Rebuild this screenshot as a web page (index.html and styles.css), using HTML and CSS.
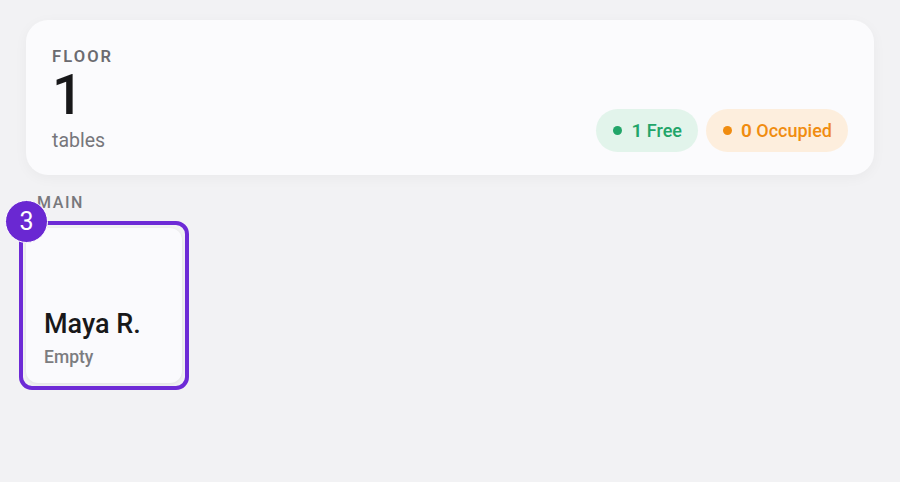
FILE: index.html
```html
<!DOCTYPE html>
<html lang="en">
<head>
<meta charset="utf-8">
<title>Floor</title>
<link rel="stylesheet" href="styles.css">
</head>
<body>
  <section class="summary">
    <div class="summary-info">
      <div class="eyebrow">FLOOR</div>
      <div class="count">1</div>
      <div class="unit">tables</div>
    </div>
    <div class="pills">
      <span class="pill pill-free"><span class="dot"></span><b>1</b> Free</span>
      <span class="pill pill-occupied"><span class="dot"></span><b>0</b> Occupied</span>
    </div>
  </section>

  <section class="area">
    <div class="area-label">MAIN</div>
    <div class="tables">
      <div class="table-wrap">
        <div class="table-card">
          <div class="table-name">Maya R.</div>
          <div class="table-status">Empty</div>
        </div>
        <div class="highlight"></div>
        <div class="badge">3</div>
      </div>
    </div>
  </section>
</body>
</html>
```

FILE: styles.css
```css
* { box-sizing: border-box; }

html, body {
  margin: 0;
  height: 100%;
}

body {
  background: #f2f2f4;
  font-family: Roboto, "Noto Sans", "Liberation Sans", sans-serif;
  padding: 20px 26px;
  color: #1a1a1c;
}

.summary {
  display: flex;
  justify-content: space-between;
  align-items: flex-end;
  background: #fbfbfd;
  border-radius: 22px;
  padding: 25px 26px 23px;
  height: 155px;
  box-shadow: 0 3px 14px rgba(0, 0, 0, 0.04);
}

.eyebrow {
  font-size: 16.5px;
  line-height: 20px;
  font-weight: 600;
  letter-spacing: 2.1px;
  color: #6b6b70;
}

.count {
  font-size: 55px;
  line-height: 56px;
  font-weight: 500;
  color: #18181a;
}

.unit {
  margin-top: 7px;
  font-size: 19.5px;
  line-height: 22px;
  color: #76767b;
}

.pills {
  display: flex;
  gap: 8px;
}

.pill {
  display: inline-flex;
  align-items: center;
  height: 43px;
  padding: 0 16px 0 17px;
  border-radius: 22px;
  font-size: 18px;
  font-weight: 500;
  white-space: pre;
}

.pill b {
  font-weight: 600;
  font-size: 19px;
}

.dot {
  width: 9px;
  height: 9px;
  border-radius: 50%;
  margin-right: 9px;
}

.pill-free {
  background: #e2f4eb;
  color: #22a569;
}
.pill-free .dot { background: #22a569; }

.pill-occupied {
  background: #fdeedd;
  color: #f08c10;
}
.pill-occupied .dot { background: #f08c10; }

.area {
  margin-top: 19px;
}

.area-label {
  padding-left: 11px;
  font-size: 16px;
  line-height: 18px;
  font-weight: 500;
  letter-spacing: 1.6px;
  color: #78787c;
}

.tables {
  margin-top: 16px;
  display: flex;
}

.table-wrap {
  position: relative;
}

.table-card {
  width: 156px;
  height: 155px;
  background: #fafafd;
  border-radius: 12px;
  box-shadow: 0 1px 4px rgba(0, 0, 0, 0.08);
  display: flex;
  flex-direction: column;
  justify-content: flex-end;
  padding: 0 18px 15px;
}

.table-name {
  font-size: 27px;
  line-height: 32px;
  font-weight: 500;
  color: #18181a;
}

.table-status {
  margin-top: 6px;
  font-size: 17.5px;
  line-height: 22px;
  font-weight: 500;
  color: #7c7c80;
}

.highlight {
  position: absolute;
  inset: -7px;
  border: 4px solid #6d2ad6;
  border-radius: 13px;
  pointer-events: none;
}

.badge {
  position: absolute;
  left: -21px;
  top: -28px;
  width: 43px;
  height: 43px;
  border-radius: 50%;
  background: #6a28d2;
  border: 1.5px solid #ffffff;
  color: #ffffff;
  font-size: 25px;
  font-weight: 400;
  display: flex;
  align-items: center;
  justify-content: center;
}
```
